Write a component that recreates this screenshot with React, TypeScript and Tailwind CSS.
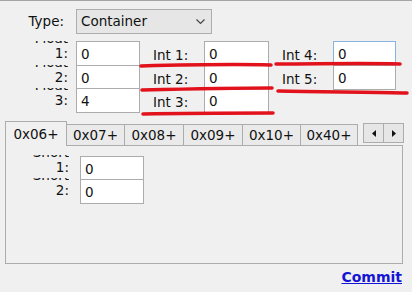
import * as React from "react";

type FieldRowProps = {
  label: string;
  value: string;
};

// two-line label ("Float\n1:") squeezed into one row, top line gets clipped
function ClippedLabel({ top, bottom, width, box }: { top: string; bottom: string; width: string; box: string }) {
  return (
    <div className={`${width} ${box} flex flex-col items-end justify-end overflow-hidden text-right leading-[15px]`}>
      <span>{top}</span>
      <span>{bottom}</span>
    </div>
  );
}

function Field({ value, width, focused }: { value: string; width: string; focused?: boolean }) {
  return (
    <input
      readOnly
      defaultValue={value}
      className={`${width} h-[25px] shrink-0 border bg-white pl-[4px] text-[#111] outline-none ${
        focused ? "border-[#86b4e2]" : "border-[#acacac]"
      }`}
    />
  );
}

function IntLabel({ label }: FieldRowProps) {
  return <div className="ml-[13px] h-[25px] w-[51px] pt-[2px] leading-[25px]">{label}</div>;
}

const tabs = [
  { name: "0x07+", w: "w-[58px]" },
  { name: "0x08+", w: "w-[59px]" },
  { name: "0x09+", w: "w-[59px]" },
  { name: "0x10+", w: "w-[58px]" },
  { name: "0x40+", w: "w-[57px]" },
];

export default function App() {
  return (
    <div className="relative h-[292px] w-[412px] overflow-hidden border-t border-[#a5a5a5] bg-[#f0f0f0] font-['DejaVu_Sans',sans-serif] text-[13.5px] text-[#111]">
      {/* type select */}
      <div className="mt-[8px] flex h-[25px] items-center">
        <div className="w-[64px] text-right">Type:</div>
        <div className="ml-[12px] flex h-[25px] w-[136px] items-center border border-[#adadad] bg-[#e6e6e6] pl-[4px]">
          <span>Container</span>
          <svg className="ml-auto mr-[6px]" width="9" height="6" viewBox="0 0 9 6">
            <path d="M0.5 0.5 L4.5 4.5 L8.5 0.5" fill="none" stroke="#444" strokeWidth="1.2" />
          </svg>
        </div>
      </div>

      {/* float / int fields */}
      <div className="mt-[7px] flex flex-col">
        <div className="flex h-[24px] items-start">
          <ClippedLabel top="Float" bottom="1:" width="w-[68px]" box="h-[20px]" />
          <div className="ml-[8px]">
            <Field value="0" width="w-[64px]" />
          </div>
          <IntLabel label="Int 1:" value="0" />
          <Field value="0" width="w-[65px]" />
          <IntLabel label="Int 4:" value="0" />
          <Field value="0" width="w-[63px]" focused />
        </div>
        <div className="flex h-[23px] items-start">
          <ClippedLabel top="Float" bottom="2:" width="w-[68px]" box="h-[20px]" />
          <div className="ml-[8px]">
            <Field value="0" width="w-[64px]" />
          </div>
          <IntLabel label="Int 2:" value="0" />
          <Field value="0" width="w-[65px]" />
          <IntLabel label="Int 5:" value="0" />
          <Field value="0" width="w-[63px]" />
        </div>
        <div className="flex h-[24px] items-start">
          <ClippedLabel top="Float" bottom="3:" width="w-[68px]" box="h-[20px]" />
          <div className="ml-[8px]">
            <Field value="4" width="w-[64px]" />
          </div>
          <IntLabel label="Int 3:" value="0" />
          <Field value="0" width="w-[65px]" />
        </div>
      </div>

      {/* tabs */}
      <div className="mt-[9px] flex h-[24px] items-end pl-[5px]">
        <div className="relative z-10 -mb-px flex h-[25px] w-[62px] items-center justify-center border border-b-0 border-[#acacac] bg-[#f0f0f0]">
          0x06+
        </div>
        {tabs.map((t) => (
          <div
            key={t.name}
            className={`${t.w} flex h-[21px] items-center justify-center border-r border-t border-[#acacac] bg-[#eaeaea] pt-[1px]`}
          >
            {t.name}
          </div>
        ))}
        <div className="mb-[2px] ml-[5px] flex h-[20px] self-end">
          <div className="flex w-[21px] items-center justify-center border border-[#acacac] bg-[#e6e6e6]">
            <svg width="4" height="7" viewBox="0 0 4 7">
              <path d="M4 0 L0 3.5 L4 7 Z" fill="#111" />
            </svg>
          </div>
          <div className="flex w-[20px] items-center justify-center border border-l-0 border-[#acacac] bg-[#e6e6e6]">
            <svg width="4" height="7" viewBox="0 0 4 7">
              <path d="M0 0 L4 3.5 L0 7 Z" fill="#111" />
            </svg>
          </div>
        </div>
      </div>

      {/* tab page */}
      <div className="ml-[5px] h-[119px] w-[398px] border border-[#acacac] bg-[#f0f0f0] pt-[10px]">
        <div className="flex h-[23px] items-start">
          <ClippedLabel top="Short" bottom="1:" width="w-[63px]" box="-mt-px h-[20px]" />
          <div className="ml-[11px]">
            <Field value="0" width="w-[64px]" />
          </div>
        </div>
        <div className="flex h-[23px] items-start">
          <ClippedLabel top="Short" bottom="2:" width="w-[63px]" box="-mt-px h-[20px]" />
          <div className="ml-[11px]">
            <Field value="0" width="w-[64px]" />
          </div>
        </div>
      </div>

      <div className="mt-[5px] pr-[10px] text-right text-[14px] leading-[16px]">
        <a href="#" className="font-bold text-[#1414d6] underline">
          Commit
        </a>
      </div>

      {/* hand-drawn red marks on top of the form */}
      <svg className="pointer-events-none absolute left-0 top-0" width="412" height="292" viewBox="0 0 412 292">
        <g fill="none" stroke="#e2121c" strokeWidth="3.5" strokeLinecap="round">
          <path d="M141 65 C180 64 230 63 271 64" />
          <path d="M142 89 C185 88 230 87 272 87" />
          <path d="M143 113 C190 112 235 112 273 112" />
          <path d="M276 63 C320 63 360 62 400 63" />
          <path d="M278 90 C320 91 370 91 407 92" />
        </g>
      </svg>
    </div>
  );
}
